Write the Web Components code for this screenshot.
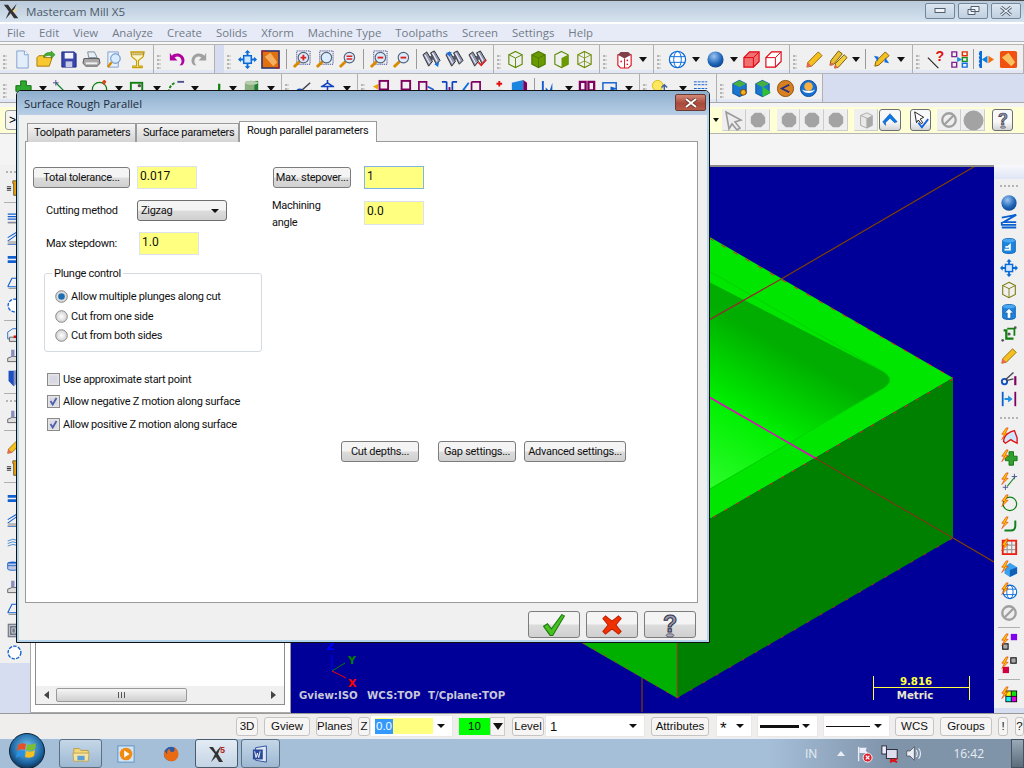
<!DOCTYPE html>
<html lang="en">
  <head>
    <meta charset="utf-8" />
    <title>Mastercam Mill X5</title>
    <style>
      html, body { margin: 0; padding: 0; overflow: hidden; background: #f0f0f0; }
      body { width: 1024px; height: 768px; font-family: Roboto, "Liberation Sans", Arial, sans-serif; font-size: 11px; }
      .checks { padding: 16px 0 0 14px; }
    </style>
  </head>
  <body>
    <mc-app>
      <mc-dialog heading="Surface Rough Parallel">
        <div slot="left" class="col">
          <mc-row gap="7"><mc-button w="97" h="21">Total tolerance...</mc-button><mc-field w="60" h="23" mt="-1">0.017</mc-field></mc-row>
          <mc-row pad="11px 0 0 13px"><mc-label w="91">Cutting method</mc-label><mc-combo w="90"><span>Zigzag</span></mc-combo></mc-row>
          <mc-row pad="11px 0 0 13px"><mc-label w="93">Max stepdown:</mc-label><mc-field w="60" h="23">1.0</mc-field></mc-row>
          <mc-group legend="Plunge control">
            <mc-option kind="radio" checked>Allow multiple plunges along cut</mc-option>
            <mc-option kind="radio">Cut from one side</mc-option>
            <mc-option kind="radio">Cut from both sides</mc-option>
          </mc-group>
          <div class="checks">
            <mc-option kind="check">Use approximate start point</mc-option>
            <mc-option kind="check" checked>Allow negative Z motion along surface</mc-option>
            <mc-option kind="check" checked>Allow positive Z motion along surface</mc-option>
          </div>
        </div>
        <div slot="right" class="col">
          <mc-row gap="13" pad="0 0 0 1px"><mc-button w="78" h="21">Max. stepover...</mc-button><mc-field w="60" h="23" mt="-1" focus>1</mc-field></mc-row>
          <mc-row pad="12px 0 0 0"><mc-label w="92" style="margin-top:-4px;align-self:flex-start">Machining<br />angle</mc-label><mc-field w="60" h="24">0.0</mc-field></mc-row>
        </div>
        <mc-button slot="actions" w="78" h="21">Cut depths...</mc-button>
        <mc-button slot="actions" w="78" h="21" ml="19">Gap settings...</mc-button>
        <mc-button slot="actions" w="102" h="21" ml="8">Advanced settings...</mc-button>
        <mc-button slot="footer" w="52" h="27"><mc-icon name="okCheck" size="26"></mc-icon></mc-button>
        <mc-button slot="footer" w="52" h="27" ml="6"><mc-icon name="cancelX" size="26"></mc-icon></mc-button>
        <mc-button slot="footer" w="52" h="27" ml="6"><mc-icon name="help" size="26"></mc-icon></mc-button>
      </mc-dialog>
    </mc-app>

    <script>
      // small svg helpers for the toolbar art, all on a 20x20 grid
      const bolt = `<path d="M7 1L2 8h3l-3 6 7-7H6l3-6z" fill="#ffc800" stroke="#e03000" stroke-width=".7"/>`;
      const hex = (fill, stroke, inner) =>
        `<path d="M10 1.5l7 3.5v10l-7 3.5L3 15V5z" fill="${fill}" stroke="${stroke}" stroke-width="1.2"/>${inner || `<path d="M3 5l7 3.5L17 5M10 8.5v10" fill="none" stroke="${stroke}"/>`}`;
      const lens = (inner) =>
        `<path d="M8 12l-6 6" stroke="#d88a00" stroke-width="3"/><circle cx="12" cy="8" r="5.5" fill="#dcecff" stroke="#51657a" stroke-width="1.2"/>${inner || ""}`;
      const dots = `<rect x="5" y="1" width="14" height="14" fill="none" stroke="#1a2a90" stroke-dasharray="1 1"/>`;
      const binoc = (over) =>
        `<path d="M1 5l4-3 6 10-4 5zM9 3l4-2 6 10-4 4z" fill="#8f97ac" stroke="#2a2a32"/><path d="M3 5l5 9M11 3l5 9" stroke="#eef" stroke-width="1.200"/><path d="M8 7l3-2 2 4-3 2z" fill="#556"/>${over || ""}`;
      const can = (over) =>
        `<path d="M3 4c0-3 14-3 14 0v12c0 3-14 3-14 0z" fill="#1b86e0" stroke="#0b5cb0"/><ellipse cx="10" cy="4" rx="7" ry="2" fill="#4aa8f0"/>${over || ""}`;
      const gray = () => `<path d="M6.500 2h7L18 6.500v7L13.500 18h-7L2 13.500v-7z" fill="#a3a3a3"/>`;

      const ICONS = {
        newDoc: `<path d="M4 1h8l4 4v14H4z" fill="#e3eefb" stroke="#7f9fd0"/><path d="M12 1v4h4" fill="#fff" stroke="#7f9fd0"/>`,
        open: `<path d="M1 8l2-2h6v2h8l-3 9H1z" fill="#f8c830" stroke="#a87810"/><path d="M8 8c0-4 4-6 8-5V1l4 4-4 4V6c-3-1-6 0-8 2z" fill="#44b030" stroke="#207818" stroke-width=".6"/>`,
        save: `<path d="M3 2h13l2 2v14H3z" fill="#3a46a8" stroke="#20288a"/><rect x="6" y="3" width="9" height="6" fill="#f4f4ff"/><rect x="7" y="12" width="7" height="6" fill="#c7cbe8"/>`,
        print: `<path d="M6 2h7l3 6H7z" fill="#e8eef6" stroke="#7a8a9a"/><path d="M2 9h16l1 5-3 3H4l-3-3z" fill="#a8a8a8" stroke="#555"/><rect x="4" y="13" width="12" height="2" fill="#eee"/>`,
        preview: `<path d="M3 2h11v16H3z" fill="#e8f0fb" stroke="#7f9fd0"/><path d="M7 13l-4 5" stroke="#d88a00" stroke-width="2.500"/><circle cx="11" cy="9" r="5" fill="#d8ecff" stroke="#5080c0"/>`,
        funnel: `<path d="M3 2h14l-1 5-5 4v6h4v1.500H5V17h4v-6L4 7z" fill="#fbf6d0" stroke="#c8a000" stroke-width="1.200"/><path d="M3 2.500h14v3H3z" fill="#b08a10" opacity=".75"/><path d="M4 4h12" stroke="#fff" stroke-dasharray="1 1"/>`,
        undo: `<path d="M3 4v8h8L8 9c3-2 6-1 7 2 1 2 0 5-2 6h3c4-3 3-10-3-12-3-1-6 0-8 2z" transform="translate(0 -1)" fill="#b000a0"/>`,
        redo: `<path d="M17 4v8H9l3-3c-3-2-6-1-7 2-1 2 0 5 2 6H4C0 14 1 7 7 5c3-1 6 0 8 2z" transform="translate(0 -1)" fill="#a0a0a0"/>`,
        pan: `<path d="M10 0l3 3h-2v3H9V3H7zM10 20l-3-3h2v-3h2v3h2zM0 10l3-3v2h3v2H3v2zM20 10l-3 3v-2h-3V9h3V7z" fill="#0a6ad8"/><rect x="6" y="6" width="8" height="8" fill="#cfe6ff" stroke="#0a6ad8" stroke-width="1.600"/>`,
        fit: `<rect x="1" y="1" width="18" height="18" fill="#e07010" stroke="#1a2a70" stroke-width="1.500"/><path d="M4 7l6-4 7 10-4 4z" fill="#f4b060"/><path d="M1 1h4M1 1v4M19 19h-4M19 19v-4" stroke="#d02020"/>`,
        zoomIn: dots + lens(`<path d="M9 8h6M12 5v6" stroke="#e02020" stroke-width="2"/>`),
        zoomBox: dots + lens(),
        zoomEq: lens(`<path d="M9 6.500h6M9 9.500h6" stroke="#e02020" stroke-width="1.600"/>`),
        zoomOutBox: dots + lens(`<path d="M9 8h6" stroke="#e02020" stroke-width="2"/>`),
        zoomOut: lens(`<path d="M9 8h6" stroke="#e02020" stroke-width="2"/>`),
        binA: binoc(`<path d="M13 15l5-3-1 6z" fill="#1070e0"/>`),
        binB: binoc(`<path d="M1 3l6-1-2 5z" fill="#1070e0"/>`),
        binC: binoc(`<path d="M11 13l3 3 5-6" fill="none" stroke="#e02020" stroke-width="1.800"/>`),
        cubeA: hex("#f0f0f0", "#5a8a00"),
        cubeB: hex("#6a9a00", "#4a7a00"),
        cubeC: hex("#f0f0f0", "#5a8a00", `<path d="M10 8.500l7-3.500v10l-7 3.500z" fill="#6a9a00"/>`),
        cubeD: hex("none", "#6a8a00", `<path d="M3 5l7 3.500L17 5M10 8.500v10M3 15l7-3.500L17 15M10 1.500v10" fill="none" stroke="#6a8a00" stroke-width=".8"/>`),
        redDice: `<path d="M3 5h14v11l-3 3H6l-3-3z" fill="#fff" stroke="#e01020" stroke-width="1.200"/><path d="M3 5l3-3h8l3 3-7 4z" fill="#804048"/><path d="M10 9v10" stroke="#e01020"/><circle cx="6.500" cy="12" r=".9" fill="#e01020"/><circle cx="13" cy="11" r=".9" fill="#e01020"/><circle cx="13" cy="15" r=".9" fill="#e01020"/>`,
        globe: `<circle cx="10" cy="10" r="8.500" fill="#fff" stroke="#0a6ad8" stroke-width="1.300"/><ellipse cx="10" cy="10" rx="4" ry="8.500" fill="none" stroke="#0a6ad8"/><path d="M2 7h16M2 13h16" stroke="#0a6ad8"/>`,
        sphere: `<defs><radialGradient id="sp" cx=".4" cy=".3" r=".8"><stop offset="0" stop-color="#9cc4f0"/><stop offset=".6" stop-color="#1f66b8"/><stop offset="1" stop-color="#0c3c80"/></radialGradient></defs><circle cx="10" cy="10" r="8.500" fill="url(#sp)"/>`,
        redCube: `<path d="M2 8l6-6h10v10l-6 6H2z" fill="#f07070" stroke="#e00010" stroke-width="1.200"/><path d="M2 8h10v10M12 8l6-6" fill="none" stroke="#e00010"/>`,
        redWire: `<path d="M2 8l6-6h10v10l-6 6H2z" fill="#fff" stroke="#e00010" stroke-width="1.200"/><path d="M2 8h10v10M12 8l6-6" fill="none" stroke="#e00010"/>`,
        pencil: `<path d="M14 2l4 4L7 17l-5 1 1-5z" fill="#f4c020" stroke="#9a6a00"/><path d="M3 13l4 4-5 1z" fill="#f06060"/>`,
        pencils: `<path d="M10 1l4 3-9 11-4 1 1-5z" fill="#e8c030" stroke="#7a5a00"/><path d="M16 5l3 3-9 10-4 1 1-5z" fill="#f4d040" stroke="#7a5a00"/><circle cx="3" cy="15" r="1.500" fill="#f06060"/><circle cx="7" cy="18" r="1.500" fill="#f06060"/>`,
        pen: `<path d="M14 2l4 4L7 16l-4 1 1-5z" fill="#f4c020" stroke="#8a5a00"/><path d="M2 6l5 1-1 5zM18 14l-5-1 1-5z" fill="#1070e0"/>`,
        whatLine: `<path d="M2 8l11 11" stroke="#222" stroke-width="1.200"/><text x="10" y="12" font-family="Liberation Sans" font-weight="700" font-size="15" fill="#e01010">?</text>`,
        flow: `<path d="M2 2h5v5H2zM2 13h5v5H2z" fill="none" stroke="#802090" stroke-width="1.500"/><path d="M13 2h5v4h-5z" fill="none" stroke="#e03000" stroke-width="1.500"/><path d="M13 8h5v4h-5z" fill="none" stroke="#109020" stroke-width="1.500"/><path d="M13 14h5v4h-5z" fill="none" stroke="#1070e0" stroke-width="1.500"/><path d="M8 10l4 0M8 8l4 2-4 2z" fill="#2090e0" stroke="#2090e0"/>`,
        joinBlue: `<path d="M4 1v18M2 4h2M2 8h2M2 12h2M2 16h2" stroke="#0a6ad8" stroke-width="2.500"/><path d="M5 10l6-4v8z" fill="#0a80e0"/><path d="M18 10l-6-4v8z" fill="#f07010"/>`,
        hammer: `<rect x="1" y="1" width="18" height="18" rx="2" fill="#f05010"/><path d="M3 8l7-5 7 10-4 4z" fill="#f8c060"/>`,
        plus: `<path d="M7 2h6v5h5v6h-5v5H7v-5H2V7h5z" fill="#30a830" stroke="#107010"/>`,
        lineTool: `<path d="M4 4l13 13" stroke="#108030" stroke-width="1.300"/><path d="M4 1v6M1 4h6" stroke="#505090"/>`,
        arcTool: `<circle cx="10" cy="11" r="7.500" fill="none" stroke="#108010" stroke-width="1.300"/><path d="M13 3l4 0M15 1l0 5" stroke="#e04010" stroke-width="2"/>`,
        rectTool: `<rect x="3" y="4" width="12" height="13" fill="none" stroke="#108010" stroke-width="2"/><circle cx="12" cy="7" r="1.800" fill="#555"/>`,
        dashTool: `<path d="M3 14c0-5 3-9 7-10" fill="none" stroke="#108010" stroke-width="2" stroke-dasharray="3 1.500"/><path d="M12 3h7" stroke="#505090" stroke-width="2"/>`,
        fillet: `<path d="M1 16h11c3 0 4-2 4-6V5" fill="none" stroke="#108010" stroke-width="2.400"/>`,
        cylinder: `<path d="M3 4c0-3 14-3 14 0v13H3z" fill="#8db080"/><path d="M13 2h4v15h-4z" fill="#208030"/><ellipse cx="10" cy="4" rx="7" ry="2" fill="#b8d0b0"/>`,
        scissor: `<circle cx="5" cy="14" r="3" fill="none" stroke="#0a50c0" stroke-width="1.800"/><path d="M7 12l9-8M8 14l10-2" stroke="#445" stroke-width="1.500"/>`,
        person: `<path d="M10 1v3M3 8h14M10 4l-6 4M10 4l6 4M10 8v4l-5 6M10 12l5 6" stroke="#1040c0" stroke-width="1.600" fill="none"/>`,
        xfA: `<path d="M2 8l6-3-1 6z" fill="#f0a000"/><rect x="9" y="2" width="9" height="9" fill="none" stroke="#800060" stroke-width="2"/>`,
        xfB: `<path d="M0 16h8" stroke="#1060d0" stroke-width="2"/><rect x="8" y="2" width="9" height="9" fill="none" stroke="#800060" stroke-width="2"/>`,
        xfC: `<path d="M2 3h8v14H2z" fill="none" stroke="#800060" stroke-width="1.800"/><path d="M11 8l6 3-1 6" fill="none" stroke="#2060d0" stroke-width="1.800"/>`,
        xfD: `<path d="M7 3H2M7 3v14H2M13 3h5M13 3v14h5" fill="none" stroke="#1040c0" stroke-width="1.800"/><path d="M9 10h2" stroke="#800060" stroke-width="3"/>`,
        xfE: `<path d="M9 3h9v15M9 3v15" fill="none" stroke="#800060" stroke-width="1.800"/><path d="M0 12l6-8" stroke="#1070e0" stroke-width="2"/>`,
        xfF: `<path d="M0 17h9" stroke="#1060d0" stroke-width="2"/><path d="M14 2v6M11 5h6" stroke="#e01010" stroke-width="2"/><path d="M11 12h6v5h-6z" fill="none" stroke="#1060d0"/>`,
        xfG: `<path d="M3 4l12-3v16H3z" fill="#1b86e0"/><path d="M15 1l4 3v14l-4-1z" fill="#800060"/>`,
        chart: `<path d="M3 2v16h15" fill="none" stroke="#1060d0" stroke-width="2"/><path d="M6 16V9l4 4 3-9v12z" fill="#1060d0"/>`,
        twoSq: `<path d="M2 3h6v9H2zM11 3h6v9h-6z" fill="none" stroke="#800060" stroke-width="2.400"/>`,
        dashBox: `<rect x="2" y="4" width="14" height="11" fill="none" stroke="#1060d0" stroke-width="1.500"/><path d="M10 8l7 2-7 3z" fill="#1060d0"/>`,
        bulb: `<circle cx="7" cy="7" r="5.500" fill="#ffe860" stroke="#d8b800"/><path d="M14 18V6M11 9l3-3 3 3" stroke="#4060a0" fill="none" stroke-width="1.500"/>`,
        bars: `<path d="M2 3h14M2 6h14M2 10h14" stroke="#1060d0" stroke-dasharray="3 1"/><path d="M10 18v-6M7 15l3-3 3 3" stroke="#1060d0" fill="none"/>`,
        boxKey: hex("#1878d0", "#105aa8", `<path d="M3 5l7-3.500L17 5l-7 3.500z" fill="#48b040"/><circle cx="14" cy="14" r="3" fill="#f0b020" stroke="#804000"/>`),
        boxPlay: hex("#1878d0", "#105aa8", `<path d="M3 5l7-3.500L17 5l-7 3.500z" fill="#48b040"/><path d="M10 8l9 6-9 5z" fill="#30c030"/>`),
        orangeC: `<circle cx="10" cy="10" r="8.500" fill="#d88020" stroke="#8a5010"/><path d="M14 6l-8 4 8 4" fill="none" stroke="#203080" stroke-width="1.800"/>`,
        blueDisc: `<circle cx="10" cy="10" r="8.500" fill="#1870d0" stroke="#0c4c9a"/><circle cx="10" cy="8" r="4.500" fill="#f8b040"/><path d="M3 11c3 5 11 5 14 0-2 2-12 2-14 0z" fill="#fff"/>`,
        arrowGhost: `<path d="M2 2l15 8-6 2 5 6-3 2-5-6-3 5z" fill="#ececec" stroke="#9a9a9a" stroke-width="1.600"/>`,
        octA: gray() + `<path d="M16 1l3 2-2 4z" fill="#e8e8e8"/>`,
        oct: gray(),
        ghostCube: `<path d="M4 5l7-3 6 3v11l-6 3-7-3z" fill="#e8e8e8" stroke="#a8a8a8"/><path d="M11 8l6-3v11l-6 3z" fill="#a8a8a8"/><path d="M4 5l7 3v11" fill="none" stroke="#a8a8a8"/>`,
        upArc: `<path d="M2 12l8-9 8 9-3 1-5-5-5 5v3z" fill="#0a78e8" stroke="#0a50a0" stroke-width=".6"/>`,
        pickCheck: `<path d="M3 1l10 6-4 2 3 4-2 1-3-4-2 3z" fill="#fff" stroke="#111"/><path d="M7 13l4 5 7-9" fill="none" stroke="#1060e0" stroke-width="2"/>`,
        noGray: `<circle cx="10" cy="10" r="7.500" fill="#eee" stroke="#a0a0a0" stroke-width="2.600"/><path d="M5 15L15 5" stroke="#a0a0a0" stroke-width="2.600"/>`,
        disc: `<circle cx="10" cy="10" r="9.500" fill="#a3a3a3"/>`,
        help: `<text x="10" y="15" text-anchor="middle" font-family="Liberation Sans" font-weight="700" font-size="18" fill="#9a9ab0" stroke="#33334a" stroke-width=".8">?</text><ellipse cx="10" cy="18" rx="3" ry="1.300" fill="#aab" stroke="#334" stroke-width=".5"/>`,
        okCheck: `<path d="M2 11l3-2 3 4L16 2l2 1-9 15H7z" fill="#48c020" stroke="#1a7a10" stroke-width=".8"/>`,
        cancelX: `<path d="M3 5l2-2 5 4 5-4 2 2-4 5 4 5-2 2-5-4-5 4-2-2 4-5z" fill="#f03000" stroke="#c02000" stroke-width=".8"/>`,
        toolY: `<path d="M1 8h5M1 10h5M1 12h5" stroke="#111"/><path d="M8 1h6v3h-1v14H9V4H8z" fill="#f0a010" stroke="#553"/>`,
        blueStack: `<path d="M2 6h14M2 9h14M2 12h14" stroke="#1060d0" stroke-width="1.400"/><path d="M2 15h14v2H2z" fill="#889"/>`,
        blueFan: `<path d="M2 17h16M2 13L16 3M2 9L12 3" stroke="#1060d0" stroke-width="1.200"/><path d="M2 13h14v4H2z" fill="#bbb"/>`,
        blueBar: `<path d="M2 6h14v3H2zM2 11h14v3H2z" fill="#1060d0"/>`,
        blueHook: `<path d="M2 15l5-10h9M2 15h14" fill="none" stroke="#1060d0" stroke-width="1.300"/><path d="M3 17h13" stroke="#888"/>`,
        blueRing: `<circle cx="10" cy="10" r="7.500" fill="#fff" stroke="#1060d0" stroke-width="1.600" stroke-dasharray="4 1.500"/>`,
        redBlock: `<path d="M2 6l6-4h8v12H2z" fill="none" stroke="#1060d0"/><path d="M4 12h12v5H4z" fill="#ddd" stroke="#555"/><rect x="9" y="10" width="7" height="3" fill="#d01010"/>`,
        blueDrill: `<path d="M3 1h12v12l-6 6-6-6z" fill="#1a50c0"/><path d="M9 1h6v12l-6 6z" fill="#8890c0"/>`,
        grayBlock: `<path d="M2 12l5-2h9v6H2z" fill="#ddd" stroke="#555"/><path d="M6 10V2h4v8" fill="#8890c0"/>`,
        wave: `<path d="M2 7l6-2 8 2M2 10l6-2 8 2M2 13l6-2 8 2" fill="none" stroke="#3080d0"/>`,
        drum: `<ellipse cx="8" cy="6" rx="6" ry="2" fill="#1060d0"/><path d="M2 6h12v7c0 2-12 2-12 0z" fill="#c0c8e0" stroke="#1060d0"/><path d="M2 9h12" stroke="#1060d0"/>`,
        maze: `<rect x="2" y="2" width="14" height="16" fill="#778" /><path d="M4 4h10v12H4zM7 7h4v6H7z" fill="none" stroke="#cdd"/>`,
        layers: `<path d="M2 4l16-3L4 9h14M2 9v3h16M2 15h16" fill="none" stroke="#0a60d0" stroke-width="2"/>`,
        canArrow: can(`<path d="M5 14h6V9l-2 2H6" fill="none" stroke="#fff" stroke-width="2"/>`),
        canUp: can(`<path d="M10 6l5 5h-3v6H8v-6H5z" fill="#fff" stroke="#0a4a90" stroke-width=".7"/>`),
        wireCube: hex("none", "#7a7a10"),
        bracket: `<path d="M4 6h3v9h8" fill="none" stroke="#108010" stroke-width="2.500"/><path d="M8 4h8v8" fill="none" stroke="#108010" stroke-width="2"/><circle cx="10" cy="10" r="1.800" fill="#555"/><circle cx="17" cy="3" r="1.500" fill="#555"/><circle cx="3" cy="17" r="1.500" fill="#555"/>`,
        scissorsBar: `<circle cx="5" cy="14" r="3" fill="none" stroke="#0a50c0" stroke-width="2"/><path d="M6 12l9-8M7 13l8-2" stroke="#445" stroke-width="1.500"/><path d="M17 8v10" stroke="#800060" stroke-width="2.400"/>`,
        sepArrow: `<path d="M3 2v16" stroke="#0a60d0" stroke-width="2"/><path d="M17 2v16" stroke="#800060" stroke-width="2"/><path d="M5 9h4V6l5 4-5 4v-3H5z" fill="#2090e0"/>`,
        bSurf: bolt + `<path d="M4 16c0-7 7-11 12-12l3 8v6l-4-2-3-2-6 4z" fill="#cfe4ff" stroke="#e01010" stroke-width="1.500"/>`,
        bPlus: `<path d="M10 3h5v5h4v5h-4v5h-5v-5H6V8h4z" fill="#30a030" stroke="#107010"/>` + bolt,
        bLine: bolt + `<path d="M8 16L17 5" stroke="#108020" stroke-width="1.200"/><path d="M16 2v6M13 5h6M6 14v6M3 17h6" stroke="#505090"/>`,
        bCircle: `<circle cx="11" cy="11" r="7.500" fill="none" stroke="#108010" stroke-width="1.300"/>` + bolt,
        bFillet: bolt + `<path d="M5 16h7c3 0 5-2 5-5V5" fill="none" stroke="#108020" stroke-width="2.200"/>`,
        bGrid: `<path d="M3 3h15v15H3zM8 3v15M13 3v15M3 8h15M3 13h15" fill="none" stroke="#a0a0a0" stroke-width="1.400"/><path d="M3 3h15v15H3z" fill="none" stroke="#f02010" stroke-width="2"/>` + bolt,
        bSolid: `<path d="M11 3l8 5v7l-8 4-6-4V8z" fill="#3aa0f0"/><path d="M11 11l8-3v7l-8 4z" fill="#1060b8"/>` + bolt,
        bGlobe: `<circle cx="11" cy="11" r="7.500" fill="#fff" stroke="#0a6ad8" stroke-width="1.200"/><ellipse cx="11" cy="11" rx="3.500" ry="7.500" fill="none" stroke="#0a6ad8"/><path d="M4 8h14M4 14h14" stroke="#0a6ad8"/>` + bolt,
        bPurple: `<rect x="12" y="1" width="7" height="7" fill="#8000f0"/><rect x="3" y="12" width="6" height="6" fill="#aaa" stroke="#111" stroke-width="1.200"/>` + bolt,
        bCrimson: `<rect x="12" y="2" width="6" height="6" fill="#aaa" stroke="#111" stroke-width="1.200"/><rect x="3" y="12" width="7" height="7" fill="#d00040"/>` + bolt,
        bPalette: `<rect x="6" y="5" width="13" height="13" fill="#111"/><rect x="7" y="6" width="5" height="5" fill="#f0f000"/><rect x="13" y="6" width="5" height="5" fill="#10e010"/><rect x="7" y="12" width="5" height="5" fill="#10f0f0"/><rect x="13" y="12" width="5" height="5" fill="#e000e0"/>` + bolt,
        folder: `<path d="M2 4h6l2 2h8v5H2z" fill="#f2d87a" stroke="#b89a40"/><path d="M1 9h18l-1 9H2z" fill="#f7e3a0" stroke="#c0a250"/><path d="M6 12h8v5H6z" fill="#5aa0d8"/>`,
        media: `<rect x="1" y="1" width="18" height="18" fill="#cfe4f6" stroke="#5a8ec0"/><circle cx="10" cy="10" r="7" fill="#f08a10"/><path d="M8 6l6 4-6 4z" fill="#fff"/>`,
        firefox: `<circle cx="10" cy="10" r="8" fill="#2a5aa8"/><path d="M3 5c-3 8 3 14 9 13 5-1 7-6 6-10-1-3-3-5-5-6 2 3 1 5-1 6-3 0-4-2-3-4-3 1-4 4-3 6-2-1-3-3-3-5z" fill="#ea6a12"/>`,
        mcx: `<path d="M2 3h4l3 5 5-6-3 8 5 8h-4l-3-5-5 5 4-8z" fill="#333"/><text x="13" y="9" font-family="Liberation Sans" font-weight="700" font-size="9" fill="#b02020">5</text>`,
        word: `<path d="M4 3l12-2v18l-12-2z" fill="#dfe7f5" stroke="#2a4a9a"/><rect x="1" y="5" width="11" height="11" fill="#2a4a9a"/><path d="M3 7l1.500 7 1.500-5 1.500 5L9 7" fill="none" stroke="#fff"/>`,
        flag: `<path d="M4 2v16" stroke="#eee" stroke-width="1.500"/><path d="M5 3h8l-1 3 2 3H5z" fill="#eef"/><circle cx="14" cy="14" r="5" fill="#e02030" stroke="#fff"/><path d="M12 12l4 4M16 12l-4 4" stroke="#fff" stroke-width="1.400"/>`,
        net: `<rect x="6" y="5" width="12" height="10" fill="#dde" stroke="#223"/><rect x="1" y="1" width="5" height="9" fill="#eef" stroke="#223"/><path d="M10 16l8 3M18 15l-8 4" stroke="#e01010" stroke-width="2"/>`,
        speaker: `<path d="M2 7h4l5-5v16l-5-5H2z" fill="#e8eef4" stroke="#556"/><path d="M13 6c2 2 2 6 0 8M16 4c3 3 3 9 0 12" fill="none" stroke="#e8eef4" stroke-width="1.300"/>`,
        orb: `<defs><radialGradient id="ob" cx=".5" cy=".4" r=".6"><stop offset="0" stop-color="#7cc8ee"/><stop offset=".7" stop-color="#1f6aa8"/><stop offset="1" stop-color="#0e3458"/></radialGradient></defs><circle cx="18" cy="18" r="17.500" fill="url(#ob)" stroke="#123"/><path d="M9 12c3-2 6-2 8-1l-1 6c-3-1-5-1-8 1z" fill="#e8502a"/><path d="M18 11c3 1 5 1 9-1l-1 6c-3 2-6 2-9 1z" fill="#7cc030"/><path d="M8 19c3-2 5-2 8-1l-1 6c-3-1-5-1-8 1z" fill="#2a90e0"/><path d="M17 18c3 1 6 1 9-1l-1 6c-3 2-6 2-9 1z" fill="#f8c020"/>`
      };

      function arrowCell(w) {
        return `<span class="arr" style="width:${w}px"><i></i></span>`;
      }

      // <mc-icon name="..." size="20">
      class McIcon extends HTMLElement {
        connectedCallback() {
          const size = this.getAttribute("size") || 20;
          const vb = this.getAttribute("vb") || "0 0 20 20";
          this.attachShadow({ mode: "open" }).innerHTML = `
            <style>:host { display: inline-flex; line-height: 0; } svg { overflow: visible; }</style>
            <svg width="${size}" height="${size}" viewBox="${vb}">${ICONS[this.getAttribute("name")] || ""}</svg>`;
        }
      }
      customElements.define("mc-icon", McIcon);

      const STRIP_STYLE = `
        .cell { display: flex; align-items: center; justify-content: center; flex: none; }
        .grip { flex: none; display: flex; justify-content: flex-start; padding: 5px 0 0 3px; box-sizing: border-box; }
        .grip i { display: block; width: 4px; height: 14px;
          background: repeating-linear-gradient(#b4b4b4 0 2px, transparent 2px 4px) left / 2px 100% no-repeat,
                      repeating-linear-gradient(#d4d4d4 0 2px, transparent 2px 4px) right / 2px 100% no-repeat; }
        .sep { flex: none; display: flex; justify-content: center; align-items: center; }
        .sep i { display: block; width: 1px; height: 20px; background: #9a9a9a; }
        .arr { flex: none; display: flex; align-items: center; justify-content: center; height: 100%; }
        .arr i { width: 0; height: 0; border: 4px solid transparent; border-top: 5px solid #111; border-bottom: 0; }
      `;

      // one toolbar band; "spec" is a list of tokens: icon names, grip:w, sep:w, arr:w, gap:w, icon:w
      function stripItems(spec) {
        return spec.trim().split(/\s+/).map((tok) => {
          const [name, arg] = tok.split(":");
          if (name === "grip") return `<span class="grip" style="width:${arg}px"><i></i></span>`;
          if (name === "sep") return `<span class="sep" style="width:${arg}px"><i></i></span>`;
          if (name === "arr") return arrowCell(arg);
          if (name === "gap") return `<span class="cell" style="width:${arg}px"></span>`;
          return `<span class="cell" style="width:${arg || 23}px"><mc-icon name="${name}" size="19"></mc-icon></span>`;
        }).join("");
      }

      class McBand extends HTMLElement {
        connectedCallback() {
          const w = this.getAttribute("w");
          this.attachShadow({ mode: "open" }).innerHTML = `
            <style>
              :host { display: flex; flex: none; box-sizing: border-box; width: ${w}px; height: 100%; background: #f0f0f0;
                border-right: 1px solid #b0b0b0; box-shadow: inset 0 -3px 0 #e2e7f6; }
              ${STRIP_STYLE}
              .items { display: flex; align-items: center; height: 100%; }
            </style>
            <div class="items">${stripItems(this.getAttribute("spec"))}</div>`;
        }
      }
      customElements.define("mc-band", McBand);

      class McTitleBar extends HTMLElement {
        connectedCallback() {
          this.attachShadow({ mode: "open" }).innerHTML = `
            <style>
              :host { display: flex; align-items: center; height: 22px; box-sizing: border-box; flex: none;
                border-top: 1px solid #4a4a4a; background: linear-gradient(#b9cadb, #d6e2ee);
                font: 11.600px "Open Sans", sans-serif; color: #4b5a68; padding-left: 3px; }
              .t { margin-left: 6px; }
              .btns { margin-left: auto; display: flex; gap: 3px; padding: 0 3px 2px 0; }
              .b { width: 30px; height: 16px; box-sizing: border-box; border: 1px solid #73879b; border-radius: 2px;
                background: linear-gradient(#dce6f0, #c0d0e0); display: flex; align-items: center; justify-content: center; }
            </style>
            <svg width="17" height="17" viewBox="0 0 20 20"><path d="M1 2h5l4 6 6-7-4 9 6 8h-5l-4-6-6 7 4-9z" fill="#333"/><path d="M11 9l7-5-4 8z" fill="#e8d8a0"/></svg>
            <span class="t">Mastercam Mill X5</span>
            <div class="btns">
              <span class="b"><svg width="12" height="7"><rect x="1" y="1.500" width="10" height="4" fill="#f0f4f8" stroke="#505f70"/></svg></span>
              <span class="b"><svg width="13" height="11"><path d="M4 1.500h8v5H4zM1 4.500h7v5H1z" fill="#f0f4f8" stroke="#505f70"/></svg></span>
              <span class="b"><svg width="12" height="10"><path d="M1 1l10 8M11 1L1 9" stroke="#505f70" stroke-width="3"/><path d="M1 1l10 8M11 1L1 9" stroke="#f0f4f8" stroke-width="1.200"/></svg></span>
            </div>`;
        }
      }
      customElements.define("mc-title-bar", McTitleBar);

      class McMenuBar extends HTMLElement {
        connectedCallback() {
          const items = ["File","Edit","View","Analyze","Create","Solids","Xform","Machine Type","Toolpaths","Screen","Settings","Help"];
          this.attachShadow({ mode: "open" }).innerHTML = `
            <style>
              :host { display: flex; gap: 14px; align-items: center; flex: none; height: 20px; box-sizing: border-box; padding: 1px 0 0 7px;
                background: linear-gradient(#ffffff 0 2px, #e7ebf7 2px); border-bottom: 1px solid #aeb4bc;
                font: 11.400px "Open Sans", sans-serif; color: #717b88; }
            </style>
            ${items.map((t) => `<span>${t}</span>`).join("")}`;
        }
      }
      customElements.define("mc-menu-bar", McMenuBar);

      class McToolRows extends HTMLElement {
        connectedCallback() {
          this.attachShadow({ mode: "open" }).innerHTML = `
            <style>
              :host { display: flex; flex-direction: column; flex: none; background: #f7f7f7; }
              .row { display: flex; background: #d6ddf0; border-top: 1px solid #b4b4b4; }
              .r1 { height: 28px; margin-top: 2px; }
              .r2 { height: 28px; border-bottom: 1px solid #a8a8a8; }
            </style>
            <div class="row r1">
              <mc-band w="154" spec="grip:11 newDoc open save print preview funnel"></mc-band>
              <mc-band w="61" spec="grip:11 undo redo"></mc-band>
              <span style="width:9px;flex:none"></span>
              <mc-band w="270" spec="grip:12 pan fit sep:8 zoomIn zoomBox zoomEq sep:8 zoomOutBox zoomOut sep:7 binA binB binC"></mc-band>
              <mc-band w="106" spec="grip:10 cubeA cubeB cubeC cubeD"></mc-band>
              <mc-band w="54" spec="grip:12 redDice:24 arr:14"></mc-band>
              <mc-band w="136" spec="grip:12 globe arr:14 sphere:24 arr:13 redCube:22 redWire:22"></mc-band>
              <mc-band w="123" spec="grip:12 pencil:24 pencils:24 arr:12 sep:7 pen:24 arr:16"></mc-band>
              <mc-band w="111" spec="grip:11 whatLine flow:25 sep:3 joinBlue hammer:20"></mc-band>
            </div>
            <div class="row r2">
              <mc-band w="282" spec="grip:12 plus arr:15 lineTool arr:15 arcTool arr:15 rectTool arr:15 dashTool arr:15 fillet arr:15 cylinder arr:15"></mc-band>
              <mc-band w="76" spec="grip:11 scissor person arr:15"></mc-band>
              <mc-band w="282" spec="grip:11 xfA xfB xfC xfD xfE xfF xfG sep:8 chart arr:15 twoSq dashBox arr:14"></mc-band>
              <mc-band w="77" spec="grip:9 bulb arr:22 bars:14"></mc-band>
              <mc-band w="106" spec="grip:11 boxKey boxPlay orangeC blueDisc"></mc-band>
            </div>`;
        }
      }
      customElements.define("mc-tool-rows", McToolRows);

      class McRibbon extends HTMLElement {
        connectedCallback() {
          const sizes = { disc: 21, arrowGhost: 20 };
          const box = (name, w, on, off) => `<span class="bx ${on ? "on" : ""}" style="width:${w}px;margin-left:${off || 0}px"><mc-icon name="${name}" size="${sizes[name] || 18}"></mc-icon></span>`;
          this.attachShadow({ mode: "open" }).innerHTML = `
            <style>
              :host { display: block; flex: none; padding-top: 4px; background: #f4f4f4; }
              .bar { display: flex; align-items: center; height: 26px; background: #ffffd6; border-bottom: 1px solid #b4b4b4; }
              .chev { margin-left: 5px; width: 20px; height: 20px; box-sizing: border-box; border: 1px solid #999; border-radius: 3px;
                background: #f4f4f4; font: 12px "Liberation Sans", sans-serif; padding-left: 3px; line-height: 18px; }
              .right { margin-left: auto; width: 315px; display: flex; align-items: center; height: 100%; }
              .arr { width: 13px; display: flex; justify-content: center; }
              .arr i { width: 0; height: 0; border: 3px solid transparent; border-top: 4px solid #111; border-bottom: 0; }
              .bx { box-sizing: border-box; height: 22px; display: flex; justify-content: center; align-items: center; flex: none;
                background: #efefef; border: 1px solid transparent; border-right-color: #ccc; border-bottom-color: #ccc; }
              .bx.on { border: 1.500px solid #6a6f78; border-radius: 3px; background: linear-gradient(#f8f8f8 60%, #d4d4d4); }
            </style>
            <div class="bar">
              <span class="chev">&gt;</span>
              <div class="right">
                <span class="arr"><i></i></span>
                ${box("arrowGhost", 24, false, 0)}${box("octA", 24)}
                ${box("oct", 23, false, 7)}${box("oct", 24)}${box("oct", 24)}
                ${box("ghostCube", 24, false, 6)}${box("upArc", 22, true, 1)}
                ${box("pickCheck", 21, true, 9)}
                ${box("noGray", 24, false, 6)}${box("disc", 24)}
                ${box("help", 21, true, 7)}
              </div>
            </div>
            <div style="height:31px"></div>`;
        }
      }
      customElements.define("mc-ribbon", McRibbon);

      // vertical toolbar: spec tokens "icon:height", "sep:h", "grip:h", "gap:h"
      class McSideBar extends HTMLElement {
        connectedCallback() {
          const cells = this.getAttribute("spec").trim().split(/\s+/).map((tok) => {
            const [name, h] = tok.split(":");
            if (name === "sep") return `<div class="sep" style="height:${h}px"><i></i></div>`;
            if (name === "grip") return `<div class="grip" style="height:${h}px"><i></i></div>`;
            if (name === "gap") return `<div style="height:${h}px"></div>`;
            return `<div class="ic" style="height:${h}px"><mc-icon name="${name}" size="${this.getAttribute("size") || 17}"></mc-icon></div>`;
          }).join("");
          this.attachShadow({ mode: "open" }).innerHTML = `
            <style>
              :host { display: flex; flex-direction: column; flex: none; width: 30px; box-sizing: border-box; background: #d6ddf0; }
              .stack { background: #f0f0f0; }
              .ic { display: flex; align-items: center; justify-content: center; padding-right: ${this.getAttribute("pr") || 0}px; }
              .sep { display: flex; align-items: center; justify-content: center; }
              .sep i { display: block; width: 22px; height: 1px; background: #b0b0b0; }
              .grip { display: flex; align-items: center; justify-content: flex-start; padding-left: 6px; }
              .grip i { display: block; width: 18px; height: 2px; background: repeating-linear-gradient(90deg, #b4b4b4 0 2px, transparent 2px 4px); }
              .top { height: 14px; background: linear-gradient(#f8f8fc, #dfe5f5); }
            </style>
            ${this.hasAttribute("lead") ? `<div class="top"></div>` : ""}
            <div class="stack">${cells}</div>`;
        }
      }
      customElements.define("mc-side-bar", McSideBar);

      class McOpsPanel extends HTMLElement {
        connectedCallback() {
          this.attachShadow({ mode: "open" }).innerHTML = `
            <style>
              :host { display: flex; flex: none; width: 261px; box-sizing: border-box; padding: 0 5px 7px 4px; background: #fff; border-right: 1px solid #999; border-left: 1px solid #aaa; border-bottom: 1px solid #aaa; }
              .frame { flex: 1; display: flex; flex-direction: column; justify-content: flex-end; border: 1px solid #8c8c8c; }
              .sb { display: flex; align-items: center; height: 18px; background: #f0f0f0; padding: 0 4px 0 3px; }
              .thumb { width: 131px; height: 14px; box-sizing: border-box; border: 1px solid #9a9a9a; border-radius: 2px;
                background: linear-gradient(#f6f6f6, #cfcfcf); display: flex; align-items: center; justify-content: center; margin-left: 7px; }
              .thumb i { width: 7px; height: 6px; background: repeating-linear-gradient(90deg, #555 0 1px, transparent 1px 3px); }
              .tri { width: 0; height: 0; border: 4px solid transparent; }
              .l { border-right: 5px solid #444; border-left: 0; margin-left: 5px; }
              .r { border-left: 5px solid #444; border-right: 0; margin-left: auto; margin-right: 4px; }
            </style>
            <div class="frame"><div class="sb"><span class="tri l"></span><span class="thumb"><i></i></span><span class="tri r"></span></div></div>`;
        }
      }
      customElements.define("mc-ops-panel", McOpsPanel);

      // graphics area: a free canvas, coordinates are the window's own pixels
      class McViewport extends HTMLElement {
        connectedCallback() {
          this.attachShadow({ mode: "open" }).innerHTML = `
            <style>
              :host { display: block; flex: none; width: 703px; background: #000098; border-top: 2px solid #8a8a8a; box-sizing: border-box; overflow: hidden; }
              svg { display: block; }
              text { font-family: "DejaVu Sans", sans-serif; font-weight: 700; font-size: 10.200px; }
            </style>
            <svg width="703" height="546" viewBox="291 167 703 546">
              <defs>
                <linearGradient id="pocket" gradientUnits="userSpaceOnUse" x1="780" y1="345" x2="690" y2="500">
                  <stop offset="0" stop-color="#00ad00"/>
                  <stop offset=".45" stop-color="#00f000"/>
                  <stop offset="1" stop-color="#38ff38"/>
                </linearGradient>
              </defs>
              <path d="M400 378L677 218 953 378 677 538z" fill="#00e600"/>
              <path d="M400 378l277 160v160L400 538z" fill="#00b000"/>
              <path d="M677 538L953 378v160L677 698z" fill="#008000"/>
              <path d="M600 226L884 372q12 8 0 16L690 500 440 360z" fill="url(#pocket)"/>
              <path d="M709 271L884 372q12 8 0 16L700 495" fill="none" stroke="#00d000" stroke-width="1"/>
              <path d="M709 238L953 378" stroke="#e02020" stroke-width="1" stroke-dasharray="5 9" fill="none"/>
              <path d="M953 379L677 538" stroke="#e02020" stroke-width="1" stroke-dasharray="4 9" fill="none"/>
              <path d="M677 698L953 538" stroke="#e02020" stroke-width=".8" stroke-dasharray="3 12" fill="none"/>
              <path d="M677 640V698" stroke="#c03030" stroke-width=".8" fill="none"/>
              <path d="M583 643L677 698" stroke="#e02020" stroke-width=".8" stroke-dasharray="3 9" fill="none"/>
              <path d="M977 165L783 278" stroke="#804000" stroke-width="1.200"/>
              <path d="M783 278L709 320" stroke="#a02030" stroke-width="1.200"/>
              <path d="M709 397L815 458" stroke="#e800c8" stroke-width="1.500"/>
              <path d="M815 458L953 538" stroke="#a02020" stroke-width="1"/>
              <path d="M953 538L994 562" stroke="#804000" stroke-width="1.200"/>
              <path d="M642 678V712" stroke="#804000" stroke-width="1.200"/>
              <path d="M332 672V655" stroke="#0000ff"/>
              <path d="M332 671L345 663" stroke="#008000"/>
              <path d="M332 671L346 678" stroke="#ff0000"/>
              <text x="327" y="650" fill="#0000ff" style="font-size:11px">Z</text>
              <text x="348" y="664" fill="#008000" style="font-size:11px">Y</text>
              <text x="348" y="687" fill="#ff0000" style="font-size:11px">X</text>
              <text x="299" y="699" fill="#c8c8d8">Gview:ISO</text>
              <text x="367" y="699" fill="#c8c8d8">WCS:TOP</text>
              <text x="428" y="699" fill="#c8c8d8">T/Cplane:TOP</text>
              <text x="916" y="685" text-anchor="middle" fill="#ffff40">9.816</text>
              <text x="915" y="699" text-anchor="middle" fill="#e8e8d0">Metric</text>
              <path d="M873.500 676V700M969.500 676V700M873 687.500H970" stroke="#ffff40" fill="none"/>
            </svg>`;
        }
      }
      customElements.define("mc-viewport", McViewport);

      class McStatusBar extends HTMLElement {
        connectedCallback() {
          const btn = (t, w, ml) => `<span class="btn" style="width:${w}px;margin-left:${ml}px">${t}</span>`;
          const tri = `<i class="tri"></i>`;
          this.attachShadow({ mode: "open" }).innerHTML = `
            <style>
              :host { display: flex; align-items: center; flex: none; height: 25px; box-sizing: border-box; padding-left: 236px;
                background: #f0eeec; border-top: 1px solid #999; font: 11.500px "Liberation Sans", sans-serif; color: #111; }
              .btn { box-sizing: border-box; height: 19px; border: 1px solid #c4c4c4; border-radius: 3px; flex: none; text-align: center; line-height: 17px; background: #f6f5f4; white-space: nowrap; }
              .sel { box-sizing: border-box; height: 22px; background: #fff; flex: none; display: flex; align-items: center; position: relative; border: 1px solid #e8e8e8; }
              .tri { width: 0; height: 0; border: 4px solid transparent; border-top: 4px solid #111; border-bottom: 0; margin-left: auto; margin-right: 7px; flex: none; }
              .yel { margin-left: 4px; width: 58px; height: 16px; background: #ffff80; display: flex; align-items: center; }
              .yel b { font-weight: 400; background: #3399ff; color: #fff; padding: 0 1px; line-height: 15px; }
              .grn { background: #00ff00; width: 31px; height: 17px; text-align: center; line-height: 17px; flex: none; }
              .gd { width: 15px; height: 19px; flex: none; display: flex; align-items: center; justify-content: center; background: #f6f5f4; border: 1px solid #ccc; box-sizing: border-box; }
              .gd i { width: 0; height: 0; border: 5px solid transparent; border-top: 7px solid #111; border-bottom: 0; }
              .line { height: 0; border-top: solid 3px #111; margin-left: 2px; }
            </style>
            ${btn("3D", 22, 0)}${btn("Gview", 46, 6)}${btn("Planes", 36, 6)}${btn("Z", 12, 6)}
            <span class="sel" style="width:83px"><span class="yel"><b>0.0</b></span>${tri}</span>
            <span class="grn" style="margin-left:6px">10</span><span class="gd"><i></i></span>
            ${btn("Level", 32, 7)}
            <span class="sel" style="width:100px;margin-left:1px;padding-left:4px;font-size:13px">1${tri}</span>
            ${btn("Attributes", 58, 6)}
            <span class="sel" style="width:36px;margin-left:7px;padding-left:3px"><span style="font-size:17px;line-height:14px;padding-top:5px">*</span>${tri}</span>
            <span class="sel" style="width:61px;margin-left:5px"><span class="line" style="width:39px"></span>${tri}</span>
            <span class="sel" style="width:67px;margin-left:5px"><span class="line" style="width:44px;border-top-width:1px"></span>${tri}</span>
            ${btn("WCS", 39, 5)}${btn("Groups", 52, 6)}${btn("!", 10, 6)}${btn("?", 9, 7)}`;
        }
      }
      customElements.define("mc-status-bar", McStatusBar);

      class McTaskbar extends HTMLElement {
        connectedCallback() {
          const task = (name, w, ml, cls) => `<span class="task ${cls || ""}" style="width:${w}px;margin-left:${ml}px"><mc-icon name="${name}" size="${name === "mcx" ? 20 : 18}"></mc-icon></span>`;
          this.attachShadow({ mode: "open" }).innerHTML = `
            <style>
              :host { display: flex; align-items: stretch; flex: none; height: 30px; box-sizing: border-box; position: relative;
                background: linear-gradient(90deg, #a6bfd9 0 75%, #7f93a9 87%); border-top: 1px solid #e8eef4;
                font: 12px "Open Sans", sans-serif; color: #e8eef4; }
              .orb { position: absolute; left: 9px; top: -6px; line-height: 0; }
              .task { flex: none; box-sizing: border-box; display: flex; align-items: center; justify-content: center; border-radius: 3px; border: 1px solid transparent; }
              .hot { background: linear-gradient(#c4d7e8, #9db8d2); border-color: #5e6f80; }
              .act { background: linear-gradient(#e4ecf4, #c4d4e4); border-color: #4a5a6a; }
              .tray { margin-left: auto; display: flex; align-items: center; }
              .tray mc-icon { margin-right: 6px; }
              .show { width: 13px; background: linear-gradient(#9aa9b8, #5c6c7c); border: 1px solid #46535f; box-sizing: border-box; margin-left: 27px; }
              .up { width: 0; height: 0; border: 4px solid transparent; border-bottom: 5px solid #e8eef4; border-top: 0; margin: 0 10px 0 20px; }
            </style>
            <span class="orb"><mc-icon name="orb" size="36" vb="0 0 36 36"></mc-icon></span>
            ${task("folder", 43, 59, "hot")}${task("media", 45, 1)}${task("firefox", 45, 0)}${task("mcx", 43, 2, "act")}${task("word", 39, 3, "hot")}
            <div class="tray">
              <span>IN</span><i class="up"></i>
              <mc-icon name="flag" size="18"></mc-icon>
              <mc-icon name="net" size="18" style="margin-left:2px"></mc-icon>
              <mc-icon name="speaker" size="17"></mc-icon>
              <span style="margin-left:25px">16:42</span>
              <span class="show" style="align-self:stretch"></span>
            </div>`;
        }
      }
      customElements.define("mc-taskbar", McTaskbar);

      class McApp extends HTMLElement {
        connectedCallback() {
          this.attachShadow({ mode: "open" }).innerHTML = `
            <style>
              :host { display: flex; flex-direction: column; width: 1024px; height: 768px; position: relative; overflow: hidden; background: #f0f0f0; }
              .main { display: flex; flex: none; height: 548px; }
            </style>
            <mc-title-bar></mc-title-bar>
            <mc-menu-bar></mc-menu-bar>
            <mc-tool-rows></mc-tool-rows>
            <mc-ribbon></mc-ribbon>
            <div class="main">
              <mc-side-bar pr="2" spec="grip:13 toolY:20 sep:8 blueStack:22 blueFan:20 blueBar:22 blueHook:24 blueRing:22 sep:8 redBlock:22 grayBlock:21 blueDrill:23 sep:6 grip:10 grayBlock:22 sep:5 pencil:27 toolY:17 sep:10 blueBar:22 blueFan:22 wave:24 drum:22 grayBlock:21 blueHook:21 maze:22 blueRing:22"></mc-side-bar>
              <mc-ops-panel></mc-ops-panel>
              <mc-viewport></mc-viewport>
              <mc-side-bar lead size="18" spec="grip:14 sphere:19 layers:22 canArrow:23 pan:22 wireCube:22 canUp:22 bracket:22 pencil:22 scissorsBar:21 sepArrow:22 grip:15 bSurf:22 bPlus:22 bLine:23 bCircle:22 bFillet:22 bGrid:22 bSolid:22 bGlobe:22 noGray:22 sep:6 bPurple:24 bCrimson:22 sep:6 bPalette:26"></mc-side-bar>
            </div>
            <mc-status-bar></mc-status-bar>
            <mc-taskbar></mc-taskbar>
            <slot></slot>`;
        }
      }
      customElements.define("mc-app", McApp);

      // the modal dialog, floats over the whole window
      class McDialog extends HTMLElement {
        connectedCallback() {
          this.attachShadow({ mode: "open" }).innerHTML = `
            <style>
              :host { position: absolute; left: 16px; top: 90px; width: 694px; height: 553px; box-sizing: border-box;
                border: 1px solid #111; border-radius: 5px 5px 0 0; background: #f0f0f0; display: flex; flex-direction: column;
                box-shadow: inset 0 0 0 2px #b4d4ec; font: 11px Roboto, "Liberation Sans", sans-serif; letter-spacing: -.28px; color: #111; }
              .cap { flex: none; height: 24px; display: flex; align-items: center; padding: 0 3px 0 7px; letter-spacing: 0;
                background: linear-gradient(#8eaecd, #b7cfe6); border-radius: 4px 4px 0 0; font: 11.300px "Open Sans", sans-serif; color: #1c2a38; }
              .x { margin-left: auto; width: 31px; height: 17px; box-sizing: border-box; border: 1px solid #6a3a34; border-radius: 2px;
                background: linear-gradient(#d48a78, #a84a3c 55%, #b85a48); display: flex; align-items: center; justify-content: center; margin-top: -1px; }
              .body { flex: 1; display: flex; flex-direction: column; padding: 5px 11px 4px 8px; min-height: 0; }
              .tabs { display: flex; align-items: flex-end; height: 21px; padding-left: 2px; flex: none; position: relative; top: 1px; white-space: nowrap; }
              .tab { box-sizing: border-box; height: 19px; border: 1px solid #9a9a9a; border-bottom: 0; background: linear-gradient(#f4f4f4, #d4d4d4);
                padding: 0 0 0 6px; flex: none; line-height: 18px; }
              .tab.on { height: 21px; background: #fff; position: relative; padding-left: 7px; line-height: 17px; }
              .page { flex: 1; background: #fff; border: 1px solid #9a9a9a; box-sizing: border-box; display: flex; flex-direction: column; padding: 25px 0 0 7px; min-height: 0; }
              .cols { display: grid; grid-template-columns: 239px 160px; }
              .actions { display: flex; padding: 0 0 0 308px; margin-top: 5px; }
              .foot { flex: none; display: flex; justify-content: flex-end; padding: 8px 2px 0 0; }
              ::slotted(.col) { display: flex; flex-direction: column; }
            </style>
            <div class="cap"><span>${this.getAttribute("heading")}</span>
              <span class="x"><svg width="14" height="10"><path d="M2 1l10 8M12 1L2 9" stroke="#5a2a24" stroke-width="3.400"/><path d="M2 1l10 8M12 1L2 9" stroke="#fff" stroke-width="2"/></svg></span></div>
            <div class="body">
              <div class="tabs">
                <span class="tab" style="width:109px">Toolpath parameters</span>
                <span class="tab" style="width:103px">Surface parameters</span>
                <span class="tab on" style="width:138px">Rough parallel parameters</span>
              </div>
              <div class="page">
                <div class="cols"><slot name="left"></slot><slot name="right"></slot></div>
                <div class="actions"><slot name="actions"></slot></div>
              </div>
              <div class="foot"><slot name="footer"></slot></div>
            </div>`;
        }
      }
      customElements.define("mc-dialog", McDialog);

      class McButton extends HTMLElement {
        connectedCallback() {
          const g = (a) => this.getAttribute(a);
          this.attachShadow({ mode: "open" }).innerHTML = `
            <style>
              :host { display: inline-flex; flex: none; box-sizing: border-box; width: ${g("w")}px; height: ${g("h")}px; margin-left: ${g("ml") || 0}px;
                align-items: center; justify-content: center; border: 1px solid #7c7c7c; border-radius: 3px;
                background: linear-gradient(#f4f4f4 0 48%, #dcdcdc 52%, #d0d0d0); white-space: nowrap; color: #111; }
            </style>
            <slot></slot>`;
        }
      }
      customElements.define("mc-button", McButton);

      class McField extends HTMLElement {
        connectedCallback() {
          const g = (a) => this.getAttribute(a);
          this.attachShadow({ mode: "open" }).innerHTML = `
            <style>
              :host { display: block; flex: none; box-sizing: border-box; width: ${g("w")}px; height: ${g("h")}px; margin-top: ${g("mt") || 0}px;
                border: 1.500px solid ${this.hasAttribute("focus") ? "#7fb4e0" : "#dde3ea"}; background: #ffff80; padding: 2px 0 0 2px; line-height: 15px; font-size: 12px; letter-spacing: 0; color: #111; }
            </style>
            <slot></slot>`;
        }
      }
      customElements.define("mc-field", McField);

      class McLabel extends HTMLElement {
        connectedCallback() {
          this.attachShadow({ mode: "open" }).innerHTML = `
            <style>
              :host { display: block; flex: none; width: ${this.getAttribute("w")}px; line-height: 17px; align-self: center; }
            </style>
            <slot></slot>`;
        }
      }
      customElements.define("mc-label", McLabel);

      class McRow extends HTMLElement {
        connectedCallback() {
          this.attachShadow({ mode: "open" }).innerHTML = `
            <style>
              :host { display: flex; align-items: flex-start; gap: ${this.getAttribute("gap") || 0}px; padding: ${this.getAttribute("pad") || 0}; }
            </style>
            <slot></slot>`;
        }
      }
      customElements.define("mc-row", McRow);

      class McCombo extends HTMLElement {
        connectedCallback() {
          this.attachShadow({ mode: "open" }).innerHTML = `
            <style>
              :host { display: flex; flex: none; align-items: center; box-sizing: border-box; width: ${this.getAttribute("w")}px; height: 21px;
                border: 1px solid #6e6e6e; border-radius: 3px; padding: 0 7px 0 3px; background: linear-gradient(#f4f4f4 0 48%, #dcdcdc 52%, #d0d0d0); }
              i { margin-left: auto; width: 0; height: 0; border: 4px solid transparent; border-top: 4px solid #111; border-bottom: 0; }
            </style>
            <slot></slot><i></i>`;
        }
      }
      customElements.define("mc-combo", McCombo);

      class McGroup extends HTMLElement {
        connectedCallback() {
          this.attachShadow({ mode: "open" }).innerHTML = `
            <style>
              :host { display: block; box-sizing: border-box; width: 218px; height: 79px; margin: 18px 0 0 11px; position: relative;
                border: 1px solid #d4dae0; border-radius: 3px; padding: 13px 0 0 10px; }
              .lg { position: absolute; left: 7px; top: -7px; background: #fff; padding: 0 2px; line-height: 14px; }
            </style>
            <span class="lg">${this.getAttribute("legend")}</span>
            <slot></slot>`;
        }
      }
      customElements.define("mc-group", McGroup);

      class McOption extends HTMLElement {
        connectedCallback() {
          const radio = this.getAttribute("kind") === "radio";
          const on = this.hasAttribute("checked");
          const mark = radio
            ? `<svg width="13" height="13"><defs><radialGradient id="rg"><stop offset="0" stop-color="#fff"/><stop offset="1" stop-color="#d0d0d0"/></radialGradient></defs><circle cx="6.500" cy="6.500" r="5.800" fill="url(#rg)" stroke="#8a8a8a"/>${on ? `<circle cx="6.500" cy="6.500" r="3.300" fill="#1f6fb0"/>` : ""}</svg>`
            : `<svg width="13" height="13"><rect x=".5" y=".5" width="12" height="12" fill="#e4e4e4" stroke="#8a8a8a"/><rect x="2.500" y="2.500" width="8" height="8" fill="#d8d8e4"/>${on ? `<path d="M3.500 6l2.200 3.500L9.500 3" fill="none" stroke="#4a5ea8" stroke-width="1.700"/>` : ""}</svg>`;
          this.attachShadow({ mode: "open" }).innerHTML = `
            <style>
              :host { display: flex; align-items: center; height: ${radio ? 19.5 : 22.5}px; gap: 3px; white-space: nowrap; }
              svg { flex: none; }
            </style>
            ${mark}<span><slot></slot></span>`;
        }
      }
      customElements.define("mc-option", McOption);
    </script>
  </body>
</html>
